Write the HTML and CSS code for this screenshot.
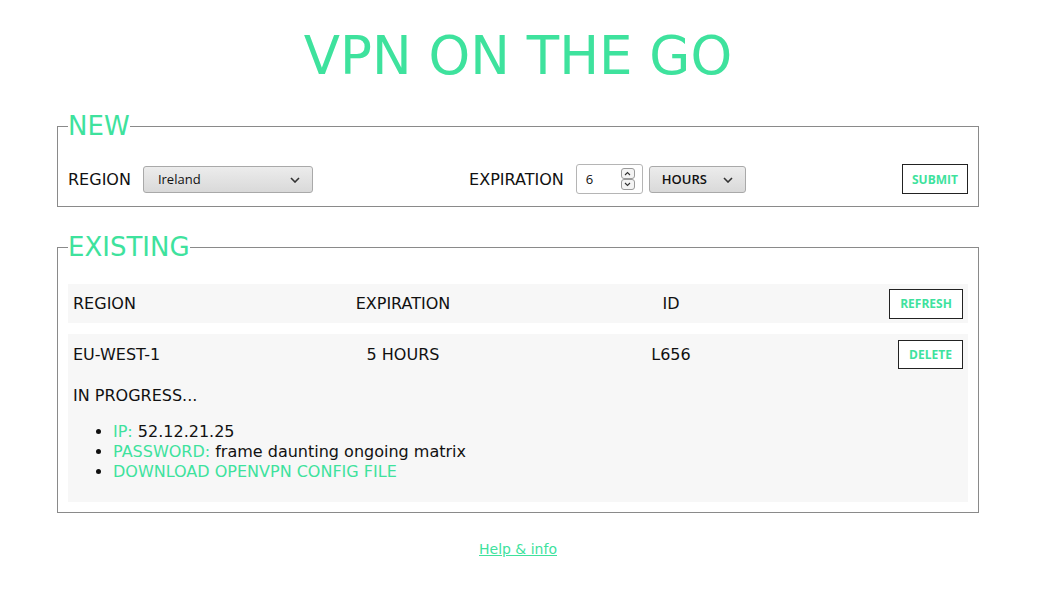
FILE: index.html
```html
<!DOCTYPE html>
<html lang="en">
<head>
<meta charset="utf-8">
<title>VPN on the go</title>
<link rel="stylesheet" href="styles.css">
</head>
<body>
<main class="main">
  <h1 class="title">VPN ON THE GO</h1>

  <fieldset class="box box-new">
    <legend class="legend">NEW</legend>
    <form class="new-row">
      <div class="group">
        <label class="label">REGION</label>
        <div class="select select-region">
          <span class="select-text">Ireland</span>
          <svg class="chev" width="10" height="6" viewBox="0 0 10 6"><path d="M1 1l4 4 4-4" fill="none" stroke="#333" stroke-width="1.6"/></svg>
        </div>
      </div>
      <div class="group">
        <label class="label">EXPIRATION</label>
        <div class="num">
          <span class="num-text">6</span>
          <span class="spin">
            <span class="spin-btn"><svg width="7" height="5" viewBox="0 0 7 5"><path d="M1 4l2.5-2.5L6 4" fill="none" stroke="#333" stroke-width="1.1"/></svg></span>
            <span class="spin-btn"><svg width="7" height="5" viewBox="0 0 7 5"><path d="M1 1l2.5 2.5L6 1" fill="none" stroke="#333" stroke-width="1.1"/></svg></span>
          </span>
        </div>
        <div class="select select-unit">
          <span class="select-text bold">HOURS</span>
          <svg class="chev" width="10" height="6" viewBox="0 0 10 6"><path d="M1 1l4 4 4-4" fill="none" stroke="#333" stroke-width="1.6"/></svg>
        </div>
      </div>
      <button type="button" class="btn btn-submit">SUBMIT</button>
    </form>
  </fieldset>

  <fieldset class="box box-existing">
    <legend class="legend">EXISTING</legend>
    <div class="row row-head">
      <div class="cell">REGION</div>
      <div class="cell center">EXPIRATION</div>
      <div class="cell center">ID</div>
      <div class="cell right"><button type="button" class="btn btn-refresh">REFRESH</button></div>
    </div>
    <div class="row row-item">
      <div class="cell">EU-WEST-1</div>
      <div class="cell center">5 HOURS</div>
      <div class="cell center">L656</div>
      <div class="cell right"><button type="button" class="btn btn-delete">DELETE</button></div>
      <div class="details">
        <div class="status">IN PROGRESS...</div>
        <ul class="info">
          <li><span class="key">IP:</span> 52.12.21.25</li>
          <li><span class="key">PASSWORD:</span> frame daunting ongoing matrix</li>
          <li><a class="key link" href="#">DOWNLOAD OPENVPN CONFIG FILE</a></li>
        </ul>
      </div>
    </div>
  </fieldset>

  <p class="help"><a href="#" class="help-link">Help &amp; info</a></p>
</main>
</body>
</html>
```
FILE: styles.css
```css
html, body {
  margin: 0;
  padding: 0;
  background: #fff;
}
body {
  font-family: "DejaVu Sans", "Liberation Sans", sans-serif;
  font-size: 16px;
  color: #111;
}
.main {
  width: 922px;
  margin-left: 57px;
}
.title {
  margin: 0;
  padding-top: 26px;
  height: 111px;
  box-sizing: border-box;
  font-size: 53px;
  line-height: 60px;
  font-weight: normal;
  text-align: center;
  color: #3ee29d;
}
.box {
  margin: 0;
  border: 1px solid #8a8a8a;
  padding: 0 10px 10px;
  min-width: 0;
}
.legend {
  padding: 0;
  font-size: 26px;
  line-height: 30px;
  color: #3ee29d;
}
.box-new {
  padding-bottom: 12px;
}
.new-row {
  display: flex;
  justify-content: space-between;
  align-items: center;
  margin-top: 23px;
}
.group {
  display: flex;
  align-items: center;
}
.label {
  font-size: 16px;
  margin-right: 12px;
}
.select {
  position: relative;
  box-sizing: border-box;
  height: 27px;
  border: 1px solid #a9a9a9;
  border-radius: 3px;
  background: linear-gradient(#ececec, #d9d9d9);
  display: flex;
  align-items: center;
  font-family: "Open Sans", "DejaVu Sans", sans-serif;
  font-size: 13px;
  color: #111;
}
.select-region {
  width: 170px;
  padding-left: 14px;
}
.select-unit {
  width: 97px;
  padding-left: 12px;
  margin-left: 6px;
}
.bold {
  font-weight: 600;
}
.chev {
  position: absolute;
  right: 12px;
  top: 10px;
}
.num {
  position: relative;
  box-sizing: border-box;
  width: 67px;
  height: 30px;
  border: 1px solid #b5b5b5;
  border-radius: 3px;
  background: #fff;
  display: flex;
  align-items: center;
  padding-left: 9px;
  font-family: "Open Sans", "DejaVu Sans", sans-serif;
  font-size: 13px;
}
.spin {
  position: absolute;
  right: 7px;
  top: 3px;
  display: flex;
  flex-direction: column;
}
.spin-btn {
  box-sizing: border-box;
  width: 14px;
  height: 11px;
  border: 1px solid #9a9a9a;
  border-radius: 3px;
  background: #f4f4f4;
  display: flex;
  align-items: center;
  justify-content: center;
}
.btn {
  box-sizing: border-box;
  background: #fff;
  border: 1px solid #222;
  color: #3ee29d;
  font-family: "Open Sans", "DejaVu Sans", sans-serif;
  font-weight: 700;
  font-size: 12px;
  padding: 0;
  cursor: pointer;
}
.btn-submit {
  width: 66px;
  height: 30px;
}
.btn-refresh {
  width: 74px;
  height: 30px;
}
.btn-delete {
  width: 65px;
  height: 29px;
}
.box-existing {
  margin-top: 25px;
}
.row {
  display: grid;
  grid-template-columns: 230px 200px 336px 1fr;
  align-items: center;
  background: #f7f7f7;
  padding: 0 5px;
}
.row-head {
  margin-top: 22px;
  height: 39px;
}
.row-item {
  margin-top: 11px;
  padding-top: 6px;
  padding-bottom: 4px;
}
.cell {
  line-height: 20px;
}
.center {
  text-align: center;
}
.right {
  text-align: right;
}
.details {
  grid-column: 1 / -1;
  margin-top: 17px;
  line-height: 20px;
}
.info {
  margin: 16px 0;
  padding-left: 40px;
}
.key {
  color: #3ee29d;
}
.link {
  text-decoration: none;
}
.help {
  margin: 26px 0 0;
  text-align: center;
  font-size: 14px;
  line-height: 20px;
}
.help-link {
  color: #3ee29d;
}
```
